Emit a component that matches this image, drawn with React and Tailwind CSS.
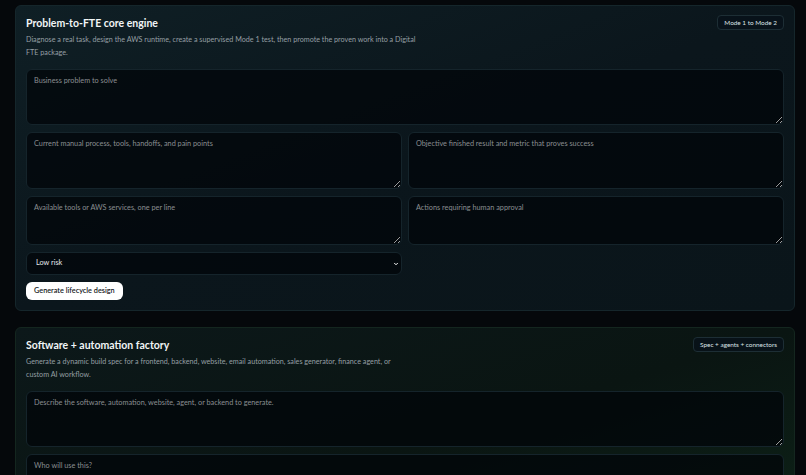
import { ChevronDown } from "lucide-react";

const field =
  "block w-full rounded-[6px] border border-[#15242b] bg-[#02050a]/75 px-[7px] pt-[5px] text-[7.3px] leading-[12px] text-[#d9dfe2] placeholder:text-[#8a8e91] outline-none resize-y";

function Badge({ children }) {
  return (
    <span className="shrink-0 -mt-px rounded-[4px] border border-[#1d2e35] bg-[#07121a]/80 px-[6px] py-[3px] text-[6.4px] leading-[7px] text-[#dbe3e6] whitespace-nowrap">
      {children}
    </span>
  );
}

function CardHeader({ title, badge, descWidth, children }) {
  return (
    <div className="flex items-start justify-between">
      <div>
        <h2 className="text-[10.5px] font-bold leading-[15px] text-[#f1f5f6]">{title}</h2>
        <p className={`mt-[3px] ${descWidth} text-[7.2px] leading-[12.5px] text-[#959fa3]`}>
          {children}
        </p>
      </div>
      <Badge>{badge}</Badge>
    </div>
  );
}

export default function App() {
  return (
    <div className="min-h-screen bg-[#05080b] pt-[5px] pb-[20px] font-['Lato',sans-serif]">
      <div className="ml-[15px] w-[780px] space-y-[16px]">
        <section className="rounded-[6px] border border-[#15262b] bg-gradient-to-br from-[#0f1f25] via-[#0b161c] to-[#0a151a] p-[10px]">
          <CardHeader
            title="Problem-to-FTE core engine"
            badge="Mode 1 to Mode 2"
            descWidth="max-w-[396px]"
          >
            Diagnose a real task, design the AWS runtime, create a supervised Mode 1 test, then
            promote the proven work into a Digital FTE package.
          </CardHeader>

          <textarea className={`${field} mt-[10px] h-[56px]`} placeholder="Business problem to solve" />

          <div className="mt-[7px] grid grid-cols-2 gap-x-[6px] gap-y-[7px]">
            <textarea
              className={`${field} h-[57px]`}
              placeholder="Current manual process, tools, handoffs, and pain points"
            />
            <textarea
              className={`${field} h-[57px]`}
              placeholder="Objective finished result and metric that proves success"
            />
            <textarea
              className={`${field} h-[49px]`}
              placeholder="Available tools or AWS services, one per line"
            />
            <textarea className={`${field} h-[49px]`} placeholder="Actions requiring human approval" />
            <div className="relative">
              <select className="block h-[23px] w-full appearance-none rounded-[6px] border border-[#15242b] bg-[#02050a]/75 pl-[9px] text-[7.3px] text-[#e3e8ea] outline-none">
                <option>Low risk</option>
                <option>Medium risk</option>
                <option>High risk</option>
              </select>
              <ChevronDown
                className="pointer-events-none absolute right-[3px] top-[9px] h-[6px] w-[6px] text-white"
                strokeWidth={4}
              />
            </div>
          </div>

          <button className="mt-[7px] h-[18px] rounded-[6px] bg-white px-[8px] text-[7.3px] font-semibold text-[#15181b]">
            Generate lifecycle design
          </button>
        </section>

        <section className="rounded-[6px] border border-[#14261f] bg-gradient-to-br from-[#0c181a] via-[#0a1512] to-[#0d2418] p-[10px]">
          <CardHeader
            title="Software + automation factory"
            badge="Spec + agents + connectors"
            descWidth="max-w-[372px]"
          >
            Generate a dynamic build spec for a frontend, backend, website, email automation, sales
            generator, finance agent, or custom AI workflow.
          </CardHeader>

          <textarea
            className={`${field} mt-[10px] h-[56px]`}
            placeholder="Describe the software, automation, website, agent, or backend to generate."
          />
          <textarea className={`${field} mt-[7px] h-[49px]`} placeholder="Who will use this?" />
          <textarea className={`${field} mt-[7px] h-[49px]`} placeholder="Required integrations" />
        </section>
      </div>
    </div>
  );
}
